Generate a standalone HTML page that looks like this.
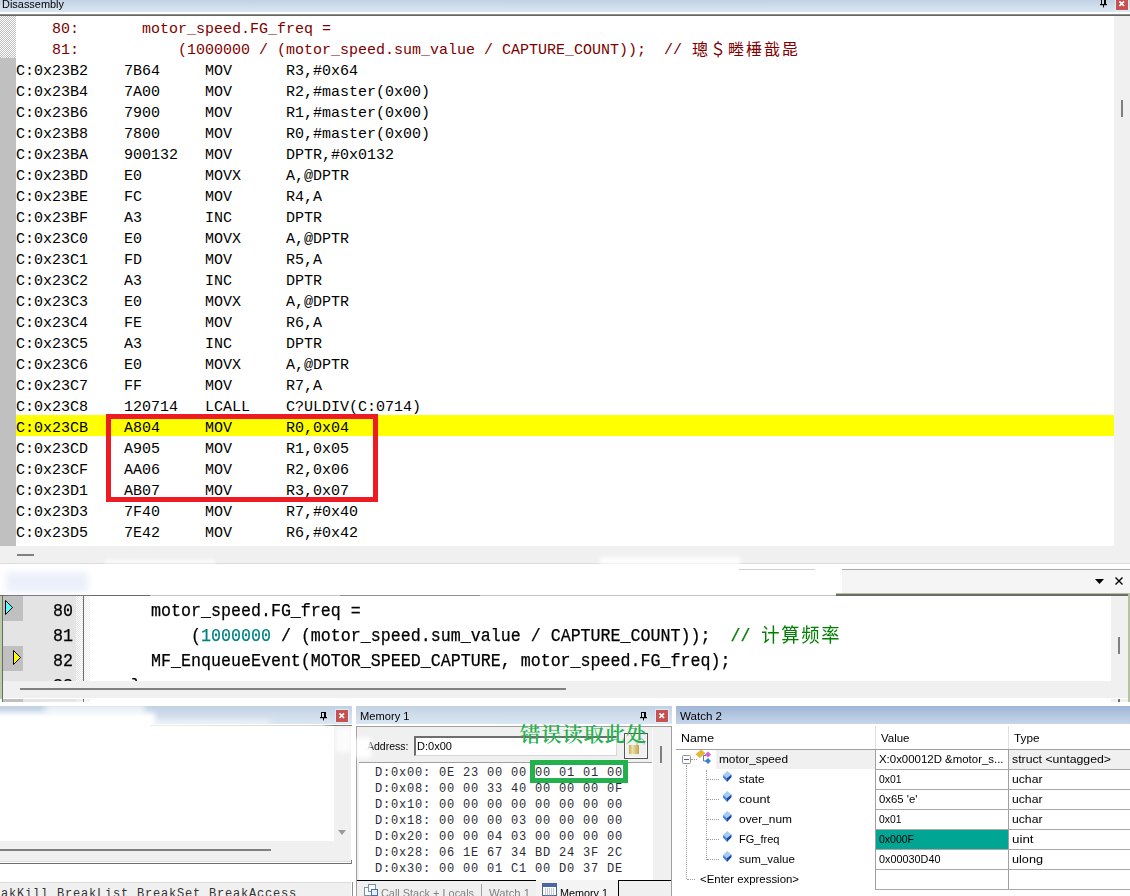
<!DOCTYPE html>
<html><head><meta charset="utf-8"><title>Disassembly</title>
<style>
html,body{margin:0;padding:0;background:#fff;}
body{width:1130px;height:896px;position:relative;overflow:hidden;font-family:"Liberation Sans","Noto Sans CJK SC",sans-serif;font-size:12px;color:#000;}
.abs{position:absolute;}
.tb{position:absolute;background:linear-gradient(#c2d2e4,#dbe6f2);font-size:12px;line-height:18px;white-space:pre;}
.dr{position:absolute;left:16px;width:1098px;height:21px;line-height:27px;font-family:"Liberation Mono","Noto Sans CJK SC",monospace;font-size:15px;white-space:pre;color:#000;}
.dr.s{color:#800000;}
.dr.hl{background:#ffff00;}
.cj{position:relative;top:1px;display:inline-block;width:18px;font-size:16px;line-height:16px;text-align:center;font-family:"Noto Sans CJK SC",sans-serif;}
.sr{position:absolute;height:25px;line-height:30.5px;-webkit-text-stroke:0.25px;font-family:"Liberation Mono","Noto Sans CJK SC",monospace;font-size:17.8px;white-space:pre;color:#000;transform:scaleX(0.9363);transform-origin:0 0;}
.cj2{position:relative;top:1px;-webkit-text-stroke:0;display:inline-block;width:21.36px;font-size:19.5px;line-height:18px;text-align:center;font-family:"Noto Sans CJK SC",sans-serif;}
.mr{position:absolute;left:375px;height:16px;line-height:17px;font-family:"Liberation Mono",monospace;font-size:12px;letter-spacing:0.8px;white-space:pre;color:#2c2c34;}
.wt{position:absolute;height:19px;line-height:19px;font-size:11.5px;white-space:pre;}
.wdia{position:absolute;left:723px;width:9px;height:11px;line-height:0;}
.hdot{position:absolute;height:0;border-top:1px dotted #a0a0a0;}
.closeb{position:absolute;width:12px;height:12px;background:#c75050;color:#fff;box-shadow:0 0 0 1px rgba(225,238,250,.8);}
</style></head><body>

<!-- ===== Disassembly panel ===== -->
<div class="tb" style="left:0;top:0;width:1130px;height:12px;line-height:12px;"><div class="wt" style="left:2px;top:-5px;transform:scaleX(0.951);transform-origin:0 50%;">Disassembly</div></div>
<svg class="abs" style="left:1100px;top:-1px" width="8" height="9" viewBox="0 0 8 9"><path fill-rule="evenodd" d="M1 0 H6 V5 H1 Z M2 1 H4 V5 H2 Z" fill="#000"/><rect x="0" y="5" width="7" height="1.2" fill="#000"/><rect x="3" y="6" width="1" height="2.4" fill="#000"/></svg><div class="closeb" style="left:1116px;top:-2px"><svg width="12" height="12" viewBox="0 0 12 12"><path d="M3.4 3.4 L8 8 M8 3.4 L3.4 8" stroke="#fff" stroke-width="1.7"/></svg></div>
<div class="abs" style="left:0;top:12px;width:1130px;height:2px;background:#fff"></div>
<div class="abs" style="left:0;top:14px;width:1130px;height:1px;background:#8c8c8c"></div>
<div class="abs" style="left:0;top:15px;width:1130px;height:1px;background:#666"></div>
<div class="abs" style="left:0;top:16px;width:16px;height:42px;background:conic-gradient(#c0c0c0 25%,#fff 0 50%,#c0c0c0 0 75%,#fff 0) 0 0/2px 2px"></div>
<div class="abs" style="left:0;top:58px;width:16px;height:488px;background:#c0c0c0"></div>
<div class="abs" style="left:1114px;top:16px;width:16px;height:530px;background:#f0f0f0"></div>
<div class="abs" style="left:1121px;top:100px;width:2px;height:17px;background:#808080"></div>
<div class="dr s" style="top:16px">    80:       motor_speed.FG_freq =</div>
<div class="dr s" style="top:37px">    81:           (1000000 / (motor_speed.sum_value / CAPTURE_COUNT));  // <span class="cj">璁</span><span class="cj">＄</span><span class="cj">畻</span><span class="cj">棰</span><span class="cj">戠</span><span class="cj">巼</span></div>
<div class="dr" style="top:58px">C:0x23B2    7B64     MOV      R3,#0x64</div>
<div class="dr" style="top:79px">C:0x23B4    7A00     MOV      R2,#master(0x00)</div>
<div class="dr" style="top:100px">C:0x23B6    7900     MOV      R1,#master(0x00)</div>
<div class="dr" style="top:121px">C:0x23B8    7800     MOV      R0,#master(0x00)</div>
<div class="dr" style="top:142px">C:0x23BA    900132   MOV      DPTR,#0x0132</div>
<div class="dr" style="top:163px">C:0x23BD    E0       MOVX     A,@DPTR</div>
<div class="dr" style="top:184px">C:0x23BE    FC       MOV      R4,A</div>
<div class="dr" style="top:205px">C:0x23BF    A3       INC      DPTR</div>
<div class="dr" style="top:226px">C:0x23C0    E0       MOVX     A,@DPTR</div>
<div class="dr" style="top:247px">C:0x23C1    FD       MOV      R5,A</div>
<div class="dr" style="top:268px">C:0x23C2    A3       INC      DPTR</div>
<div class="dr" style="top:289px">C:0x23C3    E0       MOVX     A,@DPTR</div>
<div class="dr" style="top:310px">C:0x23C4    FE       MOV      R6,A</div>
<div class="dr" style="top:331px">C:0x23C5    A3       INC      DPTR</div>
<div class="dr" style="top:352px">C:0x23C6    E0       MOVX     A,@DPTR</div>
<div class="dr" style="top:373px">C:0x23C7    FF       MOV      R7,A</div>
<div class="dr" style="top:394px">C:0x23C8    120714   LCALL    C?ULDIV(C:0714)</div>
<div class="dr hl" style="top:415px">C:0x23CB    A804     MOV      R0,0x04</div>
<div class="dr" style="top:436px">C:0x23CD    A905     MOV      R1,0x05</div>
<div class="dr" style="top:457px">C:0x23CF    AA06     MOV      R2,0x06</div>
<div class="dr" style="top:478px">C:0x23D1    AB07     MOV      R3,0x07</div>
<div class="dr" style="top:499px">C:0x23D3    7F40     MOV      R7,#0x40</div>
<div class="dr" style="top:520px">C:0x23D5    7E42     MOV      R6,#0x42</div>
<div class="abs" style="left:106px;top:414px;width:262px;height:78px;border:5px solid #ed1c24"></div>
<div class="abs" style="left:0;top:546px;width:1130px;height:17px;background:#f0f0f0"></div>
<div class="abs" style="left:17px;top:554px;width:17px;height:2px;background:#808080"></div>

<!-- ===== Source editor ===== -->
<div class="abs" style="left:0;top:563px;width:1130px;height:1px;background:#dcdcdc"></div>
<div class="abs" style="left:842px;top:569px;width:288px;height:1px;background:#a8a8a8"></div>
<div class="abs" style="left:842px;top:570px;width:288px;height:23px;background:#f5f5f5"></div>
<div class="abs" style="left:836px;top:593px;width:294px;height:1px;background:#b4c4a0"></div>
<div class="abs" style="left:836px;top:594px;width:293px;height:2px;background:#6b6b6b"></div>
<svg class="abs" style="left:1094px;top:576px" width="32" height="10" viewBox="0 0 32 10"><path d="M1 3 L10 3 L5.5 8 Z" fill="#000"/><path d="M21.5 1.5 L28.5 8.5 M28.5 1.5 L21.5 8.5" stroke="#000" stroke-width="1.35" fill="none"/></svg>
<div class="abs" style="left:0;top:596px;width:2px;height:103px;background:#bccca4"></div>
<div class="abs" style="left:2px;top:595px;width:1px;height:103px;background:#6b6b6b"></div>
<div class="abs" style="left:3px;top:596px;width:80px;height:85px;background:#e4e4e4"></div>
<div class="abs" style="left:3px;top:596px;width:20px;height:25px;background:#c0c0c0"></div>
<div class="abs" style="left:3px;top:646px;width:20px;height:25px;background:#c0c0c0"></div>
<div class="abs" style="left:76px;top:596px;width:7px;height:85px;background:conic-gradient(#e4e4e4 25%,#fff 0 50%,#e4e4e4 0 75%,#fff 0) 0 0/2px 2px"></div>
<div class="abs" style="left:83px;top:596px;width:1px;height:85px;background:#6b6b6b"></div>
<div class="abs" style="left:84px;top:596px;width:6px;height:85px;background:conic-gradient(#ececec 25%,#fff 0 50%,#ececec 0 75%,#fff 0) 0 0/2px 2px"></div>
<svg class="abs" style="left:4px;top:599px" width="20" height="70" viewBox="0 0 20 70"><path d="M1.5 1.5 L8.5 8.5 L1.5 15.5 Z" fill="#55ffff" stroke="#000" stroke-width="1"/><path d="M9.5 51.5 L16.5 58.5 L9.5 65.5 Z" fill="#ffff00" stroke="#000" stroke-width="1"/></svg>
<div class="sr" style="left:53px;top:596px;">80</div>
<div class="sr" style="left:53px;top:621px;">81</div>
<div class="sr" style="left:53px;top:646px;">82</div>
<div class="abs" style="left:53px;top:671px;width:40px;height:9.5px;overflow:hidden"><div class="sr" style="left:0;top:0;">83</div></div>
<div class="sr" style="left:151px;top:596px">motor_speed.FG_freq =</div>
<div class="sr" style="left:151px;top:621px">    (<span style="color:#008080">1000000</span> / (motor_speed.sum_value / CAPTURE_COUNT));  <span style="color:#008000">// <span class="cj2">计</span><span class="cj2">算</span><span class="cj2">频</span><span class="cj2">率</span></span></div>
<div class="sr" style="left:151px;top:646px">MF_EnqueueEvent(MOTOR_SPEED_CAPTURE, motor_speed.FG_freq);</div>
<div class="abs" style="left:111px;top:671px;width:60px;height:9.5px;overflow:hidden"><div class="sr" style="left:0;top:0">  }</div></div>
<div class="abs" style="left:1111px;top:596px;width:17px;height:85px;background:#f0f0f0"></div>
<div class="abs" style="left:1118px;top:637px;width:2px;height:17px;background:#808080"></div>
<div class="abs" style="left:1128px;top:594px;width:1.5px;height:108px;background:#b4c4a0"></div>
<div class="abs" style="left:3px;top:680.5px;width:1125px;height:17px;background:#f0f0f0"></div>
<div class="abs" style="left:20px;top:688px;width:546px;height:2px;background:#808080"></div>
<div class="abs" style="left:2px;top:698px;width:1px;height:4px;background:#6b6b6b"></div>
<div class="abs" style="left:3px;top:699px;width:20px;height:3px;background:#c0c0c0"></div>
<div class="abs" style="left:23px;top:699px;width:53px;height:3px;background:#e4e4e4"></div>
<div class="abs" style="left:76px;top:699px;width:7px;height:3px;background:#ececec"></div>
<div class="abs" style="left:83px;top:699px;width:1px;height:3px;background:#6b6b6b"></div>
<div class="abs" style="left:84px;top:699px;width:6px;height:3px;background:#f4f4f4"></div>
<div class="abs" style="left:1111px;top:699px;width:17px;height:3px;background:#f0f0f0"></div>
<div class="abs" style="left:1118px;top:699px;width:2px;height:3px;background:#707070"></div>

<!-- ===== Command panel ===== -->
<div class="abs" style="left:0;top:595px;width:150px;height:1px;background:#6b6b6b"></div>
<div class="abs" style="left:150px;top:595px;width:686px;height:1px;background:#c4c4c4"></div>
<div class="abs" style="left:340px;top:595px;width:140px;height:1px;background:#909090"></div>
<div class="abs" style="left:600px;top:557px;width:140px;height:8px;background:#fff;filter:blur(2px);opacity:.9"></div>
<div class="abs" style="left:105px;top:559px;width:110px;height:5px;background:#fff;filter:blur(1.5px);opacity:.6"></div>
<div class="abs" style="left:6px;top:572px;width:82px;height:20px;background:#e6ecf8;filter:blur(3px);opacity:.8"></div>
<div class="abs" style="left:739px;top:569px;width:76px;height:1px;background:#d0d0d0"></div>
<div class="tb" style="left:0;top:706px;width:352px;height:18px;"></div>
<svg class="abs" style="left:320px;top:712px" width="8" height="9" viewBox="0 0 8 9"><path fill-rule="evenodd" d="M1 0 H6 V5 H1 Z M2 1 H4 V5 H2 Z" fill="#000"/><rect x="0" y="5" width="7" height="1.2" fill="#000"/><rect x="3" y="6" width="1" height="2.4" fill="#000"/></svg><div class="closeb" style="left:336px;top:710px"><svg width="12" height="12" viewBox="0 0 12 12"><path d="M3.4 3.4 L8 8 M8 3.4 L3.4 8" stroke="#fff" stroke-width="1.7"/></svg></div>
<div class="abs" style="left:-10px;top:713px;width:165px;height:14px;background:#fff;filter:blur(2.5px)"></div>
<div class="abs" style="left:45px;top:705px;width:100px;height:10px;background:#fff;filter:blur(3px);opacity:.75"></div>
<div class="abs" style="left:150px;top:720px;width:120px;height:6px;background:#fff;filter:blur(3px);opacity:.6"></div>
<div class="abs" style="left:150px;top:725px;width:202px;height:1px;background:linear-gradient(90deg,rgba(128,128,128,.15),rgba(128,128,128,.35) 85%,#707070 92%)"></div>
<div class="abs" style="left:334px;top:726px;width:17px;height:116px;background:#f0f0f0"></div>
<div class="abs" style="left:336px;top:728px;width:15px;height:24px;background:#fff;filter:blur(2.5px);opacity:.85"></div>
<svg class="abs" style="left:337px;top:829px" width="10" height="7" viewBox="0 0 10 7"><path d="M1 1 H9 L5 6 Z" fill="#9a9a9a"/></svg>
<div class="abs" style="left:0;top:841px;width:351px;height:21px;background:#f0f0f0"></div>
<div class="abs" style="left:0;top:849px;width:271px;height:2px;background:#808080"></div>
<div class="abs" style="left:0;top:861px;width:352px;height:1px;background:#dcdcdc"></div>
<div class="abs" style="left:0;top:862px;width:352px;height:1px;background:#fff"></div>
<div class="abs" style="left:0;top:863px;width:352px;height:1px;background:#707070"></div>
<div class="abs" style="left:351px;top:860px;width:1px;height:4px;background:#808080"></div>
<div class="abs" style="left:0;top:882px;width:351px;height:14px;background:#f0f0f0"></div>
<div class="abs" style="left:0;top:882px;width:351px;height:1px;background:#dcdcdc"></div>
<div class="abs" style="left:352px;top:882px;width:1px;height:14px;background:#909090"></div>
<div class="mr" style="left:1px;top:886px;color:#333">akKill BreakList BreakSet BreakAccess</div>

<!-- ===== Memory panel ===== -->
<div class="tb" style="left:356px;top:706px;width:316px;height:18px;"><div class="wt" style="left:4px;top:1px;transform:scaleX(0.968);transform-origin:0 50%;">Memory 1</div></div>
<svg class="abs" style="left:640px;top:712px" width="8" height="9" viewBox="0 0 8 9"><path fill-rule="evenodd" d="M1 0 H6 V5 H1 Z M2 1 H4 V5 H2 Z" fill="#000"/><rect x="0" y="5" width="7" height="1.2" fill="#000"/><rect x="3" y="6" width="1" height="2.4" fill="#000"/></svg><div class="closeb" style="left:656px;top:710px"><svg width="12" height="12" viewBox="0 0 12 12"><path d="M3.4 3.4 L8 8 M8 3.4 L3.4 8" stroke="#fff" stroke-width="1.7"/></svg></div>
<div class="abs" style="left:356px;top:726px;width:316px;height:170px;background:#f0f0f0"></div>
<div class="abs" style="left:356px;top:726px;width:316px;height:1px;background:#a0a0a0"></div>
<div class="abs" style="left:356px;top:726px;width:1px;height:170px;background:#a0a0a0"></div>
<div class="abs" style="left:671px;top:726px;width:1px;height:170px;background:#a0a0a0"></div>
<div class="wt" style="left:367px;top:737px;transform:scaleX(0.914);transform-origin:0 50%;">Address:</div>
<div class="abs" style="left:414px;top:736px;width:200px;height:17px;background:#fff;border:1px solid #d8d8d8;border-top:2px solid #6e6e6e;border-left:2px solid #6e6e6e;"></div>
<div class="wt" style="left:417px;top:737px;transform:scaleX(0.961);transform-origin:0 50%;">D:0x00</div>
<div class="abs" style="left:624px;top:733px;width:22px;height:24px;border:1px solid #555;background:#f0f0f0;box-shadow:inset 0 0 0 1px #fcfcfc"></div>
<svg class="abs" style="left:626px;top:735px" width="20" height="22" viewBox="0 0 20 22"><defs><linearGradient id="lg" x1="0" x2="1" y1="0" y2="0"><stop offset="0" stop-color="#c4ac5c"/><stop offset=".35" stop-color="#ece0a8"/><stop offset="1" stop-color="#c0a450"/></linearGradient></defs><path d="M11 10 V7.5 a3.6 3.6 0 0 1 7.2 0 V9.5" fill="none" stroke="#b4b4b4" stroke-width="1.1"/><rect x="3" y="10" width="10" height="9" fill="url(#lg)"/></svg>
<div class="abs" style="left:356px;top:738px;width:15px;height:20px;background:#fff;filter:blur(2px)"></div>
<div class="abs" style="left:359px;top:762px;width:293px;height:1px;background:#a0a0a0"></div>
<div class="abs" style="left:359px;top:763px;width:294px;height:117px;background:#fff"></div>
<div class="abs" style="left:652px;top:729px;width:1px;height:34px;background:#fafafa"></div>
<div class="abs" style="left:660px;top:746px;width:2px;height:17px;background:#808080"></div>
<div class="mr" style="top:765px">D:0x00: 0E 23 00 00 00 01 01 00</div>
<div class="mr" style="top:781px">D:0x08: 00 00 33 40 00 00 00 0F</div>
<div class="mr" style="top:797px">D:0x10: 00 00 00 00 00 00 00 00</div>
<div class="mr" style="top:813px">D:0x18: 00 00 00 03 00 00 00 00</div>
<div class="mr" style="top:829px">D:0x20: 00 00 04 03 00 00 00 00</div>
<div class="mr" style="top:845px">D:0x28: 06 1E 67 34 BD 24 3F 2C</div>
<div class="mr" style="top:861px">D:0x30: 00 00 01 C1 00 D0 37 DE</div>
<div class="abs" style="left:530px;top:760px;width:88px;height:13px;border:5px solid #22b14c"></div>
<div class="abs" style="left:520px;top:719px;font-family:'Noto Serif CJK SC','Liberation Serif',serif;font-size:20.4px;letter-spacing:0.8px;font-weight:600;line-height:30px;color:#22b14c;white-space:pre;">错误读取此处</div>
<div class="abs" style="left:357px;top:880px;width:180px;height:1px;background:#000"></div>
<div class="abs" style="left:536px;top:880px;width:82px;height:16px;background:#f4f4f4"></div>
<div class="abs" style="left:618px;top:880px;width:1px;height:16px;background:#000"></div>
<div class="abs" style="left:618px;top:880px;width:53px;height:1px;background:#000"></div>
<svg class="abs" style="left:363px;top:884px" width="16" height="12" viewBox="0 0 16 12"><rect x="1.5" y="3.5" width="7" height="8" fill="#fff" stroke="#7890b0"/><rect x="5.5" y="0.5" width="7" height="7" fill="#fff" stroke="#7890b0"/><rect x="8.5" y="5.5" width="6" height="6" fill="#e8f0ff" stroke="#4a70b0"/></svg>
<div class="wt" style="left:381px;top:884px;color:#808080;transform:scaleX(0.948);transform-origin:0 50%;">Call Stack + Locals</div>
<div class="abs" style="left:481px;top:884px;width:1px;height:12px;background:#a0a0a0"></div>
<div class="wt" style="left:489px;top:884px;color:#808080;transform:scaleX(0.982);transform-origin:0 50%;">Watch 1</div>
<svg class="abs" style="left:542px;top:883px" width="15" height="13" viewBox="0 0 15 13"><rect x="0.5" y="0.5" width="14" height="12" fill="#fff" stroke="#506890"/><rect x="1" y="1" width="13" height="3" fill="#4868a8"/><path d="M3 6 H12 M3 8 H12 M3 10 H12 M3 12 H12" stroke="#8898b8" stroke-width="1" stroke-dasharray="1 1"/></svg>
<div class="wt" style="left:560px;top:884px;color:#000;transform:scaleX(0.939);transform-origin:0 50%;">Memory 1</div>

<!-- ===== Watch panel ===== -->
<div class="tb" style="left:676px;top:706px;width:454px;height:18px;background:linear-gradient(#9fb6d6,#c6d6ea)"><div class="wt" style="left:4px;top:1px;transform:scaleX(1.006);transform-origin:0 50%;">Watch 2</div></div>
<div class="wt" style="left:681px;top:729px;transform:scaleX(1.076);transform-origin:0 50%;">Name</div>
<div class="wt" style="left:881px;top:729px;transform:scaleX(0.998);transform-origin:0 50%;">Value</div>
<div class="wt" style="left:1014px;top:729px;transform:scaleX(1.023);transform-origin:0 50%;">Type</div>
<div class="abs" style="left:676px;top:749px;width:454px;height:1px;background:#a0a0a0"></div>
<div class="abs" style="left:875px;top:726px;width:1px;height:23px;background:#e0e0e0"></div>
<div class="abs" style="left:1008px;top:726px;width:1px;height:23px;background:#e0e0e0"></div>
<div class="abs" style="left:875px;top:749px;width:1px;height:141px;background:#a0a0a0"></div>
<div class="abs" style="left:1008px;top:749px;width:1px;height:141px;background:#a0a0a0"></div>
<div class="abs" style="left:716px;top:750px;width:159px;height:19px;background:#f0f0f0"></div>
<div class="abs" style="left:1009px;top:750px;width:121px;height:19px;background:#f0f0f0"></div>
<div class="abs" style="left:682px;top:755px;width:7px;height:7px;border:1px solid #919191;background:#fff;border-radius:1.5px"></div>
<div class="abs" style="left:684px;top:759px;width:5px;height:1px;background:#4060a0"></div>
<div class="hdot" style="left:691px;top:759px;width:6px"></div>
<div class="abs" style="left:686px;top:765px;width:0;height:114px;border-left:1px dotted #a0a0a0"></div>
<div class="abs" style="left:706px;top:770px;width:0;height:90px;border-left:1px dotted #a0a0a0"></div>
<svg class="abs" style="left:695px;top:749px" width="18" height="18" viewBox="0 0 18 18"><path d="M1 5.2 L6.2 1 L10 4.2 L4.8 8.6 Z" fill="#e8b828" stroke="#c09818" stroke-width=".5"/><path d="M11 6.5 H8.5 V12 H11" fill="none" stroke="#5878a8" stroke-width="1"/><path d="M13 2.6 L16 5.5 L13 8.4 L10 5.5 Z" fill="#d860d0"/><path d="M13 9 L16 12 L13 15 L10 12 Z" fill="#3880e0"/></svg>
<div class="wt" style="left:719px;top:750px;transform:scaleX(1.028);transform-origin:0 50%;">motor_speed</div>
<div class="wt" style="left:879px;top:750px;transform:scaleX(0.994);transform-origin:0 50%;">X:0x00012D &amp;motor_s...</div>
<div class="wt" style="left:1012px;top:750px;transform:scaleX(1.068);transform-origin:0 50%;">struct &lt;untagged&gt;</div>
<div class="wdia" style="top:771px"><svg width="9" height="11" viewBox="0 0 9 11"><path d="M4.3 0 L8.5 3.5 L4 7.1 L0 4 Z" fill="#a4ccf4"/><path d="M0 4 L4 7.1 L4 11 L0 6.6 Z" fill="#4484dc"/><path d="M4 7.1 L8.5 3.5 L8.5 6.2 L4 11 Z" fill="#1a44a4"/></svg></div>
<div class="wt" style="left:739px;top:770px;transform:scaleX(1.023);transform-origin:0 50%;">state</div>
<div class="wt" style="left:879px;top:770px;transform:scaleX(0.902);transform-origin:0 50%;">0x01</div>
<div class="wt" style="left:1012px;top:770px;transform:scaleX(1.060);transform-origin:0 50%;">uchar</div>
<div class="hdot" style="left:707px;top:779px;width:12px"></div>
<div class="wdia" style="top:791px"><svg width="9" height="11" viewBox="0 0 9 11"><path d="M4.3 0 L8.5 3.5 L4 7.1 L0 4 Z" fill="#a4ccf4"/><path d="M0 4 L4 7.1 L4 11 L0 6.6 Z" fill="#4484dc"/><path d="M4 7.1 L8.5 3.5 L8.5 6.2 L4 11 Z" fill="#1a44a4"/></svg></div>
<div class="wt" style="left:739px;top:790px;transform:scaleX(1.102);transform-origin:0 50%;">count</div>
<div class="wt" style="left:879px;top:790px;transform:scaleX(0.989);transform-origin:0 50%;">0x65 'e'</div>
<div class="wt" style="left:1012px;top:790px;transform:scaleX(1.060);transform-origin:0 50%;">uchar</div>
<div class="hdot" style="left:707px;top:799px;width:12px"></div>
<div class="wdia" style="top:811px"><svg width="9" height="11" viewBox="0 0 9 11"><path d="M4.3 0 L8.5 3.5 L4 7.1 L0 4 Z" fill="#a4ccf4"/><path d="M0 4 L4 7.1 L4 11 L0 6.6 Z" fill="#4484dc"/><path d="M4 7.1 L8.5 3.5 L8.5 6.2 L4 11 Z" fill="#1a44a4"/></svg></div>
<div class="wt" style="left:739px;top:810px;transform:scaleX(1.036);transform-origin:0 50%;">over_num</div>
<div class="wt" style="left:879px;top:810px;transform:scaleX(0.902);transform-origin:0 50%;">0x01</div>
<div class="wt" style="left:1012px;top:810px;transform:scaleX(1.060);transform-origin:0 50%;">uchar</div>
<div class="hdot" style="left:707px;top:819px;width:12px"></div>
<div class="wdia" style="top:831px"><svg width="9" height="11" viewBox="0 0 9 11"><path d="M4.3 0 L8.5 3.5 L4 7.1 L0 4 Z" fill="#a4ccf4"/><path d="M0 4 L4 7.1 L4 11 L0 6.6 Z" fill="#4484dc"/><path d="M4 7.1 L8.5 3.5 L8.5 6.2 L4 11 Z" fill="#1a44a4"/></svg></div>
<div class="wt" style="left:739px;top:830px;transform:scaleX(0.960);transform-origin:0 50%;">FG_freq</div>
<div class="abs" style="left:876px;top:830px;width:132px;height:19px;background:#00a693"></div>
<div class="wt" style="left:879px;top:830px;transform:scaleX(0.913);transform-origin:0 50%;">0x000F</div>
<div class="wt" style="left:1012px;top:830px;transform:scaleX(1.160);transform-origin:0 50%;">uint</div>
<div class="hdot" style="left:707px;top:839px;width:12px"></div>
<div class="wdia" style="top:851px"><svg width="9" height="11" viewBox="0 0 9 11"><path d="M4.3 0 L8.5 3.5 L4 7.1 L0 4 Z" fill="#a4ccf4"/><path d="M0 4 L4 7.1 L4 11 L0 6.6 Z" fill="#4484dc"/><path d="M4 7.1 L8.5 3.5 L8.5 6.2 L4 11 Z" fill="#1a44a4"/></svg></div>
<div class="wt" style="left:739px;top:850px;transform:scaleX(1.007);transform-origin:0 50%;">sum_value</div>
<div class="wt" style="left:879px;top:850px;transform:scaleX(0.943);transform-origin:0 50%;">0x00030D40</div>
<div class="wt" style="left:1012px;top:850px;transform:scaleX(1.102);transform-origin:0 50%;">ulong</div>
<div class="hdot" style="left:707px;top:859px;width:12px"></div>
<div class="abs" style="left:876px;top:769px;width:254px;height:1px;background:#a8a8a8"></div>
<div class="abs" style="left:876px;top:789px;width:254px;height:1px;background:#a8a8a8"></div>
<div class="abs" style="left:876px;top:809px;width:254px;height:1px;background:#a8a8a8"></div>
<div class="abs" style="left:876px;top:829px;width:254px;height:1px;background:#a8a8a8"></div>
<div class="abs" style="left:876px;top:849px;width:254px;height:1px;background:#a8a8a8"></div>
<div class="abs" style="left:876px;top:869px;width:254px;height:1px;background:#a8a8a8"></div>
<div class="abs" style="left:876px;top:889px;width:254px;height:1px;background:#a8a8a8"></div>
<div class="hdot" style="left:687px;top:879px;width:8px"></div>
<div class="wt" style="left:700px;top:870px;transform:scaleX(0.993);transform-origin:0 50%;">&lt;Enter expression&gt;</div>

</body></html>
